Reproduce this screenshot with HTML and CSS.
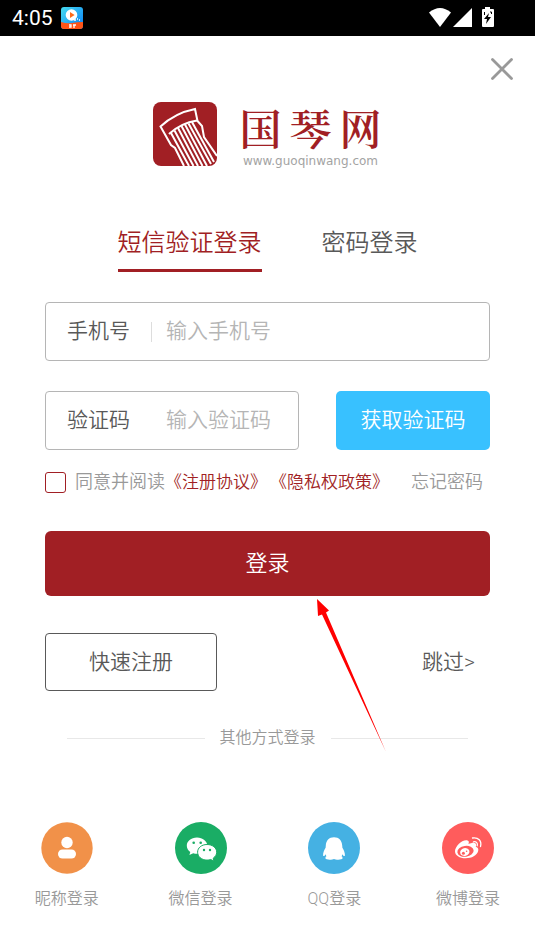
FILE: index.html
```html
<!DOCTYPE html>
<html lang="zh-CN">
<head>
<meta charset="utf-8">
<meta name="viewport" content="width=device-width, initial-scale=1">
<title>国琴网</title>
<link rel="stylesheet" href="styles.css">
</head>
<body>
<header class="status">
  <span class="time">4:05</span>
  <svg class="app" viewBox="0 0 22 22" aria-hidden="true">
    <defs><linearGradient id="sky" x1="0" y1="0" x2="1" y2="1"><stop offset="0" stop-color="#46dcf0"/><stop offset="1" stop-color="#087cf5"/></linearGradient></defs>
    <rect width="22" height="22" rx="3" fill="url(#sky)"/>
    <path d="M0 15q6 2 11 1t11-1v4q0 3-3 3H3q-3 0-3-3z" fill="#ff5417"/>
    <circle cx="10.5" cy="8" r="5.8" fill="#fff"/>
    <path d="M9 5l4.600 3L9 11z" fill="#ff6a1a"/>
    <path d="M13 13h2m1-1h1m1 1h1M8 18h2v2H8m4-2h3m-2 0v3" stroke="#fff" stroke-width="1.300" fill="none"/>
  </svg>
  <svg class="signals" viewBox="0 0 66 22" aria-hidden="true">
    <path d="M0 5.500Q11-3.500 22 5.500L11 20z" fill="#fff"/>
    <path d="M43 1v19H24z" fill="#fff"/>
    <path d="M56 0h5v2h3q1 0 1 1v16q0 1-1 1H54q-1 0-1-1V3q0-1 1-1h2z" fill="#fff"/>
    <path d="M60 6l-5 6h3l-1 5 5-7h-3z" fill="#000"/><path d="M55.500 5v3M61 5h1.500v2" fill="none" stroke="#000"/>
  </svg>
</header>
<main>
  <div class="top">
    <button class="close" type="button" aria-label="关闭"><svg viewBox="0 0 22 22"><path d="M1.500 1.500l19 19M20.500 1.500l-19 19" stroke="#999" stroke-width="2.800" stroke-linecap="round"/></svg></button>
  </div>
  <div class="brand">
    <svg class="mark" viewBox="0 0 64 64" aria-hidden="true">
      <rect width="64" height="64" rx="8" fill="#a11f24"/>
      <g fill="none" stroke="#fff" stroke-width="2">
        <path d="M31 64L22 46 18 43 7.500 24.500Q22 11 42 7L44.500 19 49 24 51 35 64 54"/>
        <path d="M16 32Q28 21 44 18.500" stroke-width="2.200"/>
        <path d="M18 31L36 64M21.500 28.500L40.500 64M25 26L45 64M28.500 24L49.500 64M32 22.500L54 64M35.500 21.500L58 62M39 20L61 60"/>
      </g>
    </svg>
    <div class="wordmark">
      <h1><span>国</span><span>琴</span><span>网</span></h1>
      <p>www.guoqinwang.com</p>
    </div>
  </div>
  <nav class="tabs">
    <button class="tab active" type="button">短信验证登录</button>
    <button class="tab" type="button">密码登录</button>
  </nav>
  <form>
    <div class="field">
      <label for="phone">手机号</label>
      <span class="rule"></span>
      <input id="phone" type="tel" placeholder="输入手机号">
    </div>
    <div class="code-row">
      <div class="field">
        <label for="code">验证码</label>
        <span class="rule clear"></span>
        <input id="code" type="text" placeholder="输入验证码">
      </div>
      <button class="send" type="button">获取验证码</button>
    </div>
    <div class="agree">
      <input id="agree" type="checkbox">
      <label for="agree">同意并阅读</label>
      <span class="legal"><a href="#">《注册协议》</a><a href="#">《隐私权政策》</a></span>
      <a class="forgot" href="#">忘记密码</a>
    </div>
    <button class="login" type="submit">登录</button>
    <div class="alt">
      <button class="register" type="button">快速注册</button>
      <a href="#">跳过&gt;</a>
      <svg class="arrow" viewBox="0 0 70 154" aria-hidden="true"><path d="M0 0L12 11.500 9 13.500 69 153 5 15.500 1 17z" fill="#f00"/></svg>
    </div>
  </form>
  <div class="divider">其他方式登录</div>
  <nav class="social">
    <a href="#">
      <svg viewBox="0 0 52 52" aria-hidden="true"><circle cx="26" cy="26" r="25.700" fill="#f19149"/><circle cx="26" cy="20.500" r="5.700" fill="#fff"/><rect x="17" y="27.500" width="18" height="9" rx="4.500" fill="#fff"/></svg>
      <span>昵称登录</span>
    </a>
    <a href="#">
      <svg viewBox="0 0 52 52" aria-hidden="true"><circle cx="26" cy="26" r="26" fill="#1aad65"/><path d="M22 15.500c-6 0-10.200 3.700-10.200 8.200 0 2.500 1.300 4.700 3.500 6.200l-.9 3.200 3.800-1.900c1.200.4 2.500.6 3.800.6 5.700 0 10.300-3.600 10.300-8.100S27.700 15.500 22 15.500z" fill="#fff"/><path d="M32 22.500c-5.500 0-9.400 3.400-9.400 7.700s4 7.900 9.400 7.900c1.400 0 2.600-.2 3.700-.6l3.300 1.600-.8-2.900c2-1.400 3.500-3.500 3.500-6 0-4.300-4.200-7.700-9.700-7.700z" fill="#fff" stroke="#1aad65"/><g fill="#1aad65"><circle cx="18.700" cy="20.800" r="1.300"/><circle cx="25.700" cy="20.800" r="1.300"/><circle cx="29" cy="28" r="1.200"/><circle cx="35" cy="28" r="1.200"/></g></svg>
      <span>微信登录</span>
    </a>
    <a href="#">
      <svg viewBox="0 0 52 52" aria-hidden="true"><circle cx="26" cy="26" r="26" fill="#45b1e3"/><path d="M26 15.300c-5 0-8 3.400-8.200 8.200l-.2 2.300c-1.400 2.200-2.700 5.200-2.500 7.400.1 1.600 1.400.9 2.600-1 .1.900.4 1.500.8 2-.8.400-1.200 1.100-1 2.400.4 1.400 7 1.400 8.500.3 1.500 1.100 8 1.100 8.500-.3.200-1.300-.2-2-1-2.400.4-.5.700-1.100.8-2 1.200 1.900 2.500 2.600 2.600 1 .2-2.200-1.100-5.200-2.500-7.400l-.2-2.300c-.2-4.800-3.200-8.200-8.200-8.200z" fill="#fff"/></svg>
      <span>QQ登录</span>
    </a>
    <a href="#">
      <svg viewBox="0 0 52 52" aria-hidden="true"><circle cx="26" cy="26" r="26" fill="#ff5c5c"/><path d="M25.500 18.500c1.800.5 1.500 2 .9 3.600 3-1.300 5.600-1.900 7-.8.900.7.900 2 .4 3.500 2.400.9 2.900 2.400 2.300 4.500-1.200 4.200-6.300 7-12.500 7-6 0-10.600-2.700-10.600-7 0-4.800 7.300-12.100 12.500-10.800z" fill="#fff"/><ellipse cx="23.500" cy="29.300" rx="8.200" ry="5.400" transform="rotate(-8 23.500 29.300)" fill="#ff5c5c"/><ellipse cx="22.800" cy="30" rx="4.700" ry="4" transform="rotate(-15 22.800 30)" fill="#fff"/><circle cx="21.400" cy="31.200" r="1.500" fill="#ff5c5c"/><circle cx="24.600" cy="29.300" r=".8" fill="#ff5c5c"/><path d="M30.500 16c5.800-1 9.500 3 8 8.500M31.500 19.800c2.800-.5 4.500 1.500 3.700 4" fill="none" stroke="#fff" stroke-width="1.300" stroke-linecap="round"/></svg>
      <span>微博登录</span>
    </a>
  </nav>
</main>
</body>
</html>
```
FILE: styles.css
```css
* { box-sizing: border-box; }
body {
  margin: 0;
  background: #fff;
  color: #595959;
  font-family: Roboto, "Noto Sans CJK SC", sans-serif;
  font-size: 21px;
  font-weight: 350;
}
button, input { font: inherit; color: inherit; margin: 0; }
button { border: 0; background: none; padding: 0; cursor: pointer; }
a { color: inherit; text-decoration: none; }
svg { display: block; }

.status {
  display: flex;
  align-items: center;
  height: 36px;
  padding: 0 40px 0 12px;
  background: #000;
  color: #fff;
}
.time { font-weight: 400; }
.app { width: 22px; height: 22px; margin-left: 8px; }
.signals { width: 66px; height: 22px; margin-left: auto; }

.top { display: flex; justify-content: flex-end; padding: 22px 22px 0; }
.close svg { width: 22px; height: 22px; }

.brand { display: flex; justify-content: center; gap: 22px; margin-top: 22px; }
.mark { width: 64px; height: 64px; }
.wordmark { display: flex; flex-direction: column; }
.wordmark h1 {
  display: flex;
  gap: 8px;
  margin: 0;
  color: #a11f24;
  font-family: "Noto Serif CJK SC", "Noto Sans CJK SC", serif;
  font-size: 42px;
  font-weight: 600;
  line-height: 50px;
}
.wordmark p {
  margin: 0;
  padding-top: 2px;
  color: #a3a3a3;
  font-family: "DejaVu Sans", sans-serif;
  font-size: 12px;
  font-weight: 400;
  line-height: 14px;
  text-align: center;
}

.tabs { display: flex; justify-content: center; gap: 60px; margin-top: 57px; }
.tab { padding: 0 0 8px; border-bottom: 3px solid transparent; font-size: 24px; line-height: 36px; }
.tab.active { border-color: #a11f24; color: #a11f24; }

form { padding: 30px 45px 0; }
.field {
  display: flex;
  align-items: center;
  min-width: 0;
  padding: 13px 21px;
  border: 1px solid #b5b5b5;
  border-radius: 4px;
  line-height: 31px;
}
.field label { flex: none; }
.rule { flex: none; width: 1px; height: 20px; margin: 0 14px 0 21px; background: #ddd; }
.rule.clear { background: none; }
.field input { flex: 1; min-width: 0; height: 31px; padding: 0; border: 0; outline: 0; background: none; }
.field input::placeholder { color: #b5b5b5; opacity: 1; }
.code-row { display: grid; grid-template-columns: 254fr 154fr; gap: 37px; margin-top: 30px; }
.send { border-radius: 5px; background: #38c1ff; color: #fff; line-height: 31px; }

.agree {
  display: flex;
  align-items: center;
  margin-top: 18px;
  color: #999;
  font-size: 18px;
  line-height: 28px;
  white-space: nowrap;
}
.agree input {
  flex: none;
  appearance: none;
  width: 21px;
  height: 21px;
  margin-right: 9px;
  border: 1px solid #a11f24;
  border-radius: 3px;
}
.agree input:checked { background: #a11f24; }
.legal { display: flex; gap: 3px; color: #a11f24; font-size: 17px; }
.forgot { margin: 0 7px 0 auto; }

.login {
  width: 100%;
  margin-top: 35px;
  padding: 15px;
  border-radius: 6px;
  background: #a11f24;
  color: #fff;
  font-size: 22px;
  line-height: 35px;
}
.alt {
  position: relative;
  display: flex;
  justify-content: space-between;
  align-items: center;
  margin-top: 37px;
  padding-right: 15px;
  line-height: 32px;
}
.register { padding: 12px 43px; border: 1px solid #595959; border-radius: 4px; line-height: 32px; }
.arrow { position: absolute; left: 272px; top: -34px; width: 70px; height: 154px; }

.divider {
  display: flex;
  align-items: center;
  gap: 15px;
  margin-top: 35px;
  padding: 0 67px;
  color: #999;
  font-size: 16px;
  line-height: 24px;
}
.divider::before, .divider::after { content: ""; flex: 1; height: 1px; background: #e8e8e8; }

.social { display: grid; grid-template-columns: repeat(4, 1fr); margin-top: 72px; color: #999; font-size: 16px; line-height: 24px; }
.social a { display: flex; flex-direction: column; align-items: center; gap: 13px; }
.social svg { width: 52px; height: 52px; }
```
